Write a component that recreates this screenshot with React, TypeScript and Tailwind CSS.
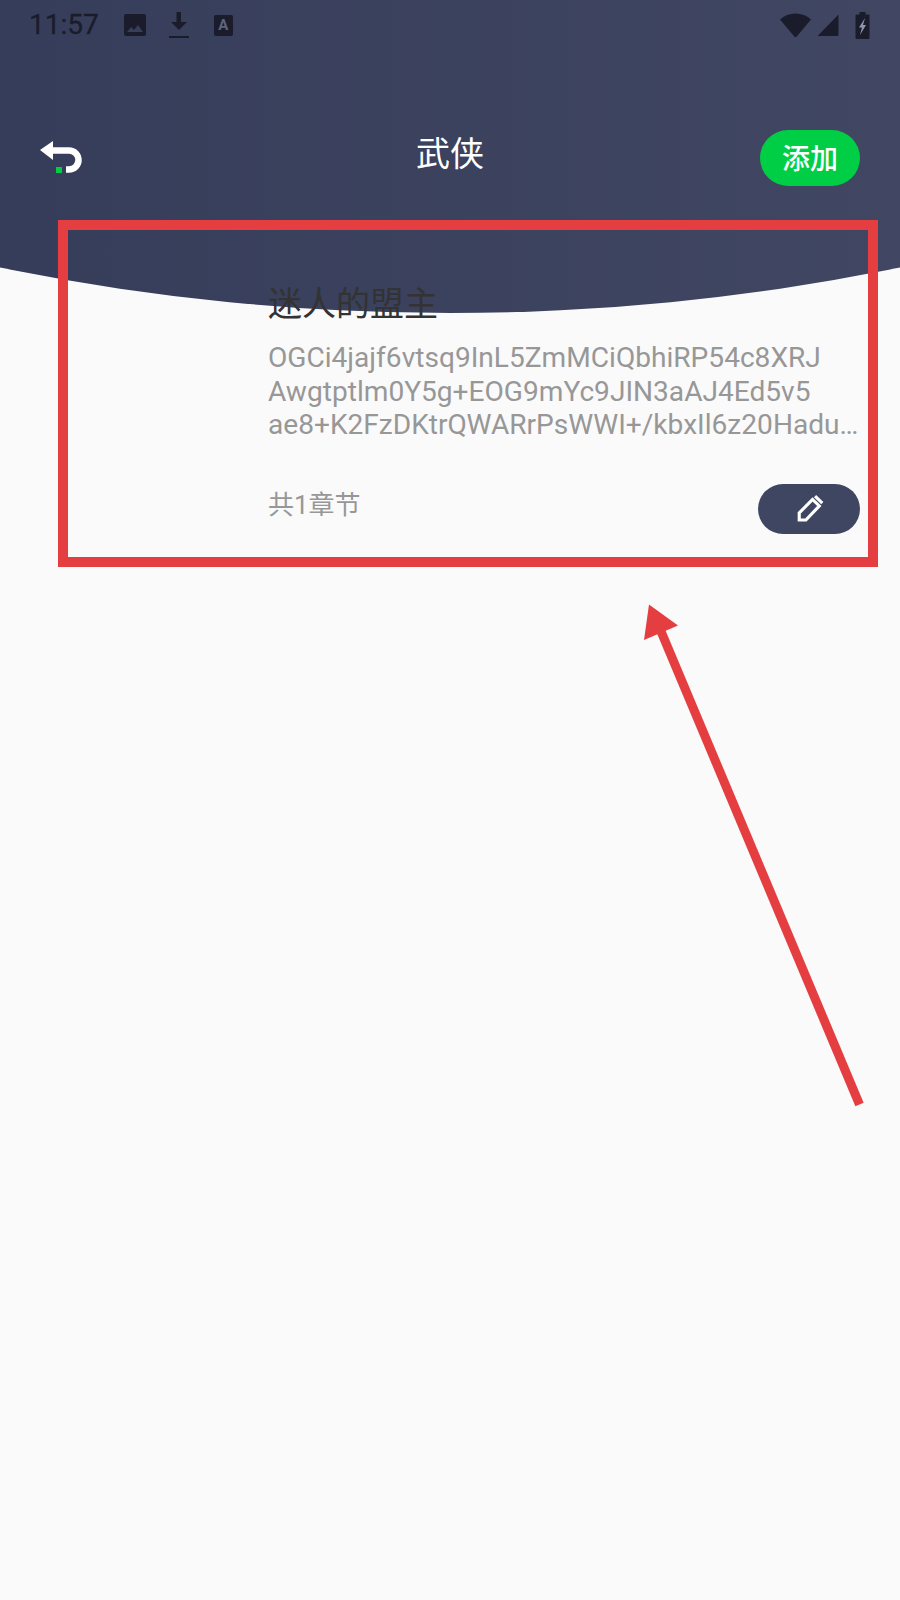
const FONT = "font-['Roboto','Noto_Sans_CJK_SC',sans-serif]";

function StatusBar() {
  return (
    <div className="flex h-[50px] items-center pl-[29px] pr-[30px] text-[#1a1c2b]">
      <span className="text-[28px] leading-none [-webkit-text-stroke:0.3px_#1a1c2b]">11:57</span>
      {/* image */}
      <svg className="ml-[24px] h-[24px] w-[24px]" viewBox="0 0 24 24" fill="currentColor">
        <path d="M3 1h18a2 2 0 0 1 2 2v18a2 2 0 0 1-2 2H3a2 2 0 0 1-2-2V3a2 2 0 0 1 2-2Zm1 18h16l-5-7-4 5-3-3-4 5Z" fillRule="evenodd" />
      </svg>
      {/* download */}
      <svg className="ml-[21px] h-[28px] w-[22px]" viewBox="0 0 22 28" fill="currentColor">
        <path d="M8.5 1h4.5v10h6l-8 8-8-8h5.5ZM1 25h20v2H1Z" />
      </svg>
      {/* keyboard a */}
      <div className="ml-[24px] flex h-[21px] w-[19px] items-center justify-center rounded-[2px] bg-[#1a1c2b] text-[15px] font-bold leading-none text-[#5d6480]">
        A
      </div>
      <div className="ml-auto flex items-center">
        <svg className="h-[25px] w-[33px]" viewBox="0 0 32 25" fill="currentColor">
          <path d="M0.5 6.5C4.5 2.5 10 0.5 16 0.5s11.5 2 15.5 6L17.2 23.5a1.6 1.6 0 0 1-2.4 0Z" />
        </svg>
        <svg className="ml-[4px] h-[24px] w-[24px]" viewBox="0 0 23 24" fill="currentColor">
          <path d="M22 1.5V22a1 1 0 0 1-1 1H1Z" />
        </svg>
        <svg className="ml-[15px] h-[27px] w-[15px]" viewBox="0 0 14 27" fill="currentColor">
          <path d="M4 0h6v2.5h3a1 1 0 0 1 1 1V26a1 1 0 0 1-1 1H1a1 1 0 0 1-1-1V3.5a1 1 0 0 1 1-1h3Z" />
          <path d="M9.5 6 3.5 15.5h3L4.5 23 10.5 13H7.5Z" fill="#8f96ad" />
        </svg>
      </div>
    </div>
  );
}

function NavRow() {
  return (
    <div className="relative mt-[80px] flex h-[56px] items-center justify-between pl-[40px] pr-[40px]">
      <svg className="h-[34px] w-[44px]" viewBox="0 0 44 34" fill="none">
        <path d="M0 9 13 0v19Z" fill="#fff" />
        <path d="M12 9.5h17a9.5 9.5 0 0 1 0 19h-3" stroke="#fff" strokeWidth="6.5" />
        <rect x="16" y="26" width="6" height="6" fill="#00ce44" />
      </svg>
      <h1 className="absolute left-0 right-0 -top-[4px] h-[56px] text-center text-[34px] font-normal leading-[56px] text-white">武侠</h1>
      <button className="relative flex h-[56px] w-[100px] items-center justify-center rounded-full bg-[#00ce44] pt-[3px] text-[28px] font-medium text-white">
        添加
      </button>
    </div>
  );
}

function BookCard() {
  return (
    <div className="relative -mt-[29px] ml-[268px] mr-[40px]">
      <h2 className="h-[40px] text-[34px] font-normal leading-[40px] text-[#333]">迷人的盟主</h2>
      <div className="mt-[17px] text-[28.1px] leading-[33.5px] text-[#979797]">
        <p>OGCi4jajf6vtsq9InL5ZmMCiQbhiRP54c8XRJ</p>
        <p>Awgtptlm0Y5g+EOG9mYc9JIN3aAJ4Ed5v5</p>
        <p>ae8+K2FzDKtrQWARrPsWWI+/kbxIl6z20Hadu…</p>
      </div>
      <div className="mt-[42px] flex items-center justify-between">
        <span className="-translate-y-[4px] text-[26px] leading-none text-[#979797]">共1章节</span>
        <button className="flex h-[50px] w-[102px] items-center justify-center rounded-full bg-[#3f4661]">
          <svg className="h-[29px] w-[29px]" viewBox="0 0 24 24" fill="none" stroke="#fff" strokeWidth="2.6">
            <path d="M3.5 21.5v-5.8L14.5 4.5l5.6 5.4L9 21.5Z" />
            <path d="M16.6 1.8l6 5.8" />
          </svg>
        </button>
      </div>
    </div>
  );
}

export default function App() {
  return (
    <div className={`relative h-[1600px] w-[900px] overflow-hidden bg-[#fafafa] ${FONT}`}>
      {/* Curved header */}
      <div className="h-[313px] bg-gradient-to-r from-[#363d5a] to-[#414762] [clip-path:circle(2250px_at_50%_-1937px)]">
        <StatusBar />
        <NavRow />
      </div>

      <BookCard />

      {/* Red annotation */}
      <div className="absolute left-[58px] top-[220px] h-[347px] w-[820px] border-[10px] border-[#e53e41]" />
      <svg className="absolute left-0 top-0 h-[1600px] w-[900px]" viewBox="0 0 900 1600" fill="none">
        <path d="M859.5 1104.5 660 629" stroke="#e53e41" strokeWidth="9" />
        <path d="M649 604.5 678 625.5 644 640Z" fill="#e53e41" />
      </svg>
    </div>
  );
}
